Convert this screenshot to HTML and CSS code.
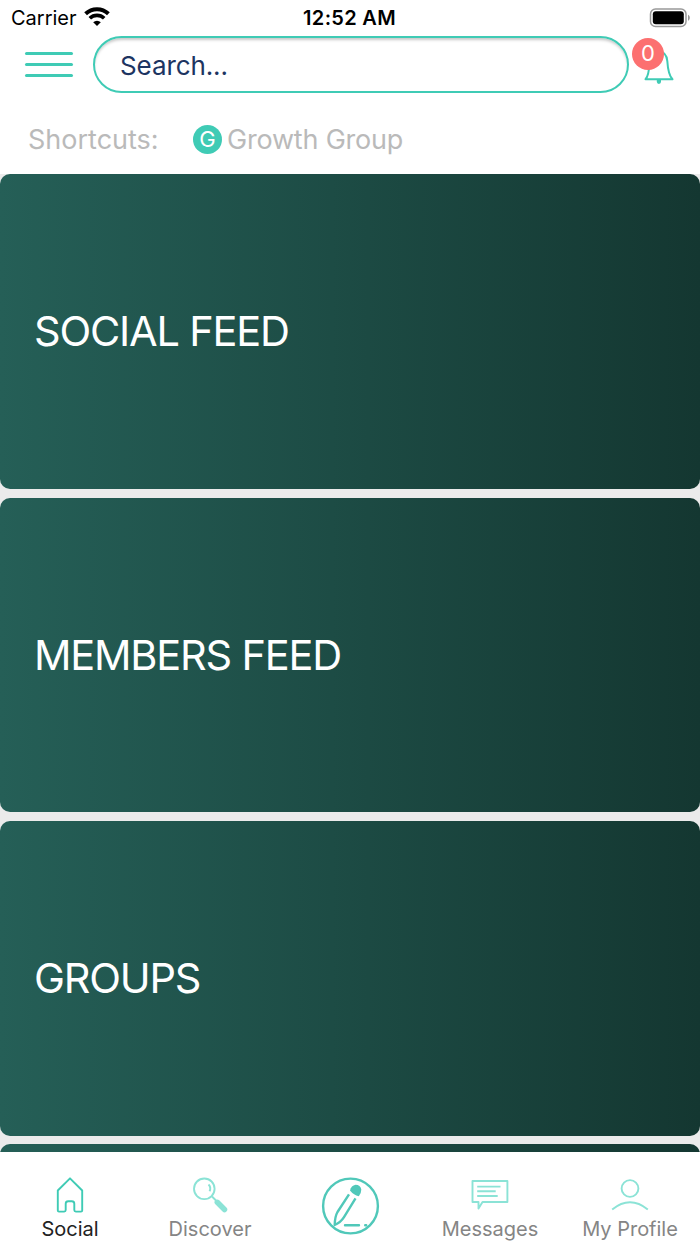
FILE: index.html
```
<!DOCTYPE html>
<html lang="en">
<head>
    <meta charset="UTF-8">
    <title>Social</title>
    <link rel="stylesheet" href="styles.css">
</head>
<body>
<div class="status">
    <div class="carrier">
        <span>Carrier</span>
        <svg class="wifi" width="26" height="20" viewBox="0 0 26 20">
            <path d="M1.6 6.7a16.5 16.5 0 0 1 22.8 0" fill="none" stroke="#000" stroke-width="4"/>
            <path d="M5.8 11.3a10.3 10.3 0 0 1 14.4 0" fill="none" stroke="#000" stroke-width="3.6"/>
            <path d="M9.2 15.2a5.5 5.5 0 0 1 7.6 0L13 19z"/>
        </svg>
    </div>
    <div class="time">12:52 AM</div>
    <svg class="battery" width="42" height="20" viewBox="0 0 42 20">
        <rect x="1.5" y="1" width="35.5" height="17.5" rx="5" fill="none" stroke="#999" stroke-width="1.5"/>
        <rect x="3.8" y="3.2" width="31" height="13" rx="3"/>
        <path d="M39 6.8c2.4 1 2.4 5 0 6z" fill="#999"/>
    </svg>
</div>
<div class="header">
    <div class="menu"><i></i><i></i><i></i></div>
    <div class="search">Search...</div>
    <div class="bell">
        <svg width="34" height="38" viewBox="0 0 34 38">
            <path d="M3.5 32.2Q6.800 29 7.500 16 8.500 5.500 17 4.500 24.500 5 25.300 14 26.200 28 30.500 32.200z" fill="none" stroke="#3fcbb5" stroke-width="2" stroke-linejoin="round"/>
            <path d="M14.800 33h4.200v1.800a2.100 2.100 0 0 1-4.200 0z" fill="#3fcbb5"/>
        </svg>
        <span class="badge">0</span>
    </div>
</div>
<div class="shortcuts">
    <span class="label">Shortcuts:</span>
    <span class="dot">G</span>
    <span class="group">Growth Group</span>
</div>
<div class="feed">
    <div class="card">SOCIAL FEED</div>
    <div class="card">MEMBERS FEED</div>
    <div class="card">GROUPS</div>
    <div class="card"></div>
</div>
<div class="tabs">
    <div class="tab active">
        <svg width="40" height="40" viewBox="0 0 40 40">
            <path d="M7.800 15.500L20 3.300 32.200 15.500V35.400q0 1.200-1.200 1.200h-5.200q-1.500 0-1.500-1.500v-6.400q0-2.500-2.500-2.500h-3.600q-2.500 0-2.500 2.500v6.400q0 1.500-1.500 1.500H9q-1.200 0-1.200-1.200z"/>
        </svg>
        <span>Social</span>
    </div>
    <div class="tab">
        <svg width="40" height="40" viewBox="0 0 40 40">
            <circle cx="14.300" cy="13.800" r="10.300"/>
            <path d="M18.500 9.500q3 3 1 6.800M22 21.500l4 4"/>
            <path d="M27.300 27.300l7.200 7.200" stroke-width="5.500" stroke-linecap="round"/>
        </svg>
        <span>Discover</span>
    </div>
    <div class="tab write">
        <svg width="60" height="60" viewBox="0 0 60 60">
            <circle cx="30.500" cy="31" r="27.400"/>
            <path d="M29 19.300L17.500 37q-2.600 4.500-2.800 13 5.800-2.300 9.300-7.800L35.500 23.300"/>
            <path d="M30 15.500q1.200-5 5.500-5.800 5 .2 5.800 4.800 0 4-2.500 6.700-5-1-8.800-5.700z" class="solid"/>
            <path d="M25 50.300h14M45.200 50.300h1" stroke-linecap="round"/>
        </svg>
    </div>
    <div class="tab">
        <svg width="40" height="40" viewBox="0 0 40 40">
            <path d="M2.500 6h34.900v21H12.500L8.500 33.500v-6.500H2.500z"/>
            <path d="M7.200 11.600h23.300M7.200 16.300h18.500M7.200 21h20.500"/>
        </svg>
        <span>Messages</span>
    </div>
    <div class="tab">
        <svg width="40" height="40" viewBox="0 0 40 40">
            <circle cx="20" cy="13.500" r="8.400"/>
            <path d="M2.200 34.500q17.800-14.500 35.600 0"/>
        </svg>
        <span>My Profile</span>
    </div>
</div>
</body>
</html>
```
FILE: styles.css
```
*{
    padding:0;
    margin: 0;
    box-sizing: border-box;
}
body{
    width: 700px;
    height: 1244px;
    overflow: hidden;
    background: #fff;
    font-family: Inter, "Liberation Sans", sans-serif;
    display: flex;
    flex-direction: column;
}
.status{
    height: 36px;
    padding: 0 9px 0 11px;
    display: grid;
    grid-template-columns: 1fr auto 1fr;
    align-items: center;
    font-size: 20px;
    line-height: 36px;
}
.carrier{
    display: flex;
    align-items: center;
    gap: 7px;
}
.wifi{
    margin-top: -3px;
}
.time{
    font-weight: 600;
    letter-spacing: .3px;
    margin-left: -3px;
}
.battery{
    justify-self: end;
    margin-top: -1px;
}
.header{
    height: 68px;
    padding-left: 25px;
    display: flex;
    align-items: flex-start;
}
.menu{
    width: 48px;
    margin: 16px 20px 0 0;
    display: flex;
    flex-direction: column;
    gap: 8px;
}
.menu i{
    height: 3px;
    border-radius: 2px;
    background: #3fcbb5;
}
.search{
    width: 536px;
    height: 57px;
    border: 2px solid #3fcbb5;
    border-radius: 29px;
    padding-left: 25px;
    box-shadow: inset 0 3px 3px -1px rgba(0,0,0,.22);
    color: #1d3461;
    font-size: 26px;
    letter-spacing: -.1px;
    line-height: 55px;
}
.bell{
    position: relative;
    width: 60px;
    height: 52px;
    padding: 11px 0 0 13px;
}
.badge{
    position: absolute;
    left: 3px;
    top: 2px;
    width: 32px;
    height: 32px;
    border-radius: 50%;
    background: #fc7070;
    color: #fff;
    font-size: 22px;
    line-height: 31px;
    text-align: center;
}
.shortcuts{
    height: 70px;
    padding-left: 28px;
    display: flex;
    align-items: center;
    color: #bababa;
    font-size: 27px;
}
.label{
    width: 165px;
}
.dot{
    width: 29px;
    height: 29px;
    margin-right: 5px;
    border-radius: 50%;
    background: #3fcbb5;
    color: #fff;
    font-size: 22px;
    line-height: 29px;
    text-align: center;
}
.group{
    letter-spacing: -.2px;
}
.feed{
    height: 978px;
    padding-top: .3px;
    overflow: hidden;
    background: #ebebeb;
    display: flex;
    flex-direction: column;
    gap: 8.6px;
}
.card{
    flex: none;
    height: 314.7px;
    border-radius: 10px;
    padding-left: 34px;
    background: linear-gradient(90deg, #255f57, #143731);
    color: #fff;
    font-size: 41.5px;
    letter-spacing: -1.2px;
    line-height: 314px;
}
.tabs{
    height: 92px;
    display: grid;
    grid-template-columns: repeat(5, 1fr);
}
.tab{
    display: flex;
    flex-direction: column;
    align-items: center;
    padding-top: 23px;
    color: #858585;
    font-size: 20px;
    line-height: 28px;
}
.tab svg{
    fill: none;
    stroke: #8be3d6;
    stroke-width: 1.9;
    stroke-linejoin: round;
}
.tab.active{
    color: #222;
}
.tab.active svg{
    stroke: #3fcbb5;
}
.tab.write svg{
    stroke: #50c8b9;
    stroke-width: 2.4;
}
.write .solid{
    fill: #50c8b9;
    stroke: none;
}
```
